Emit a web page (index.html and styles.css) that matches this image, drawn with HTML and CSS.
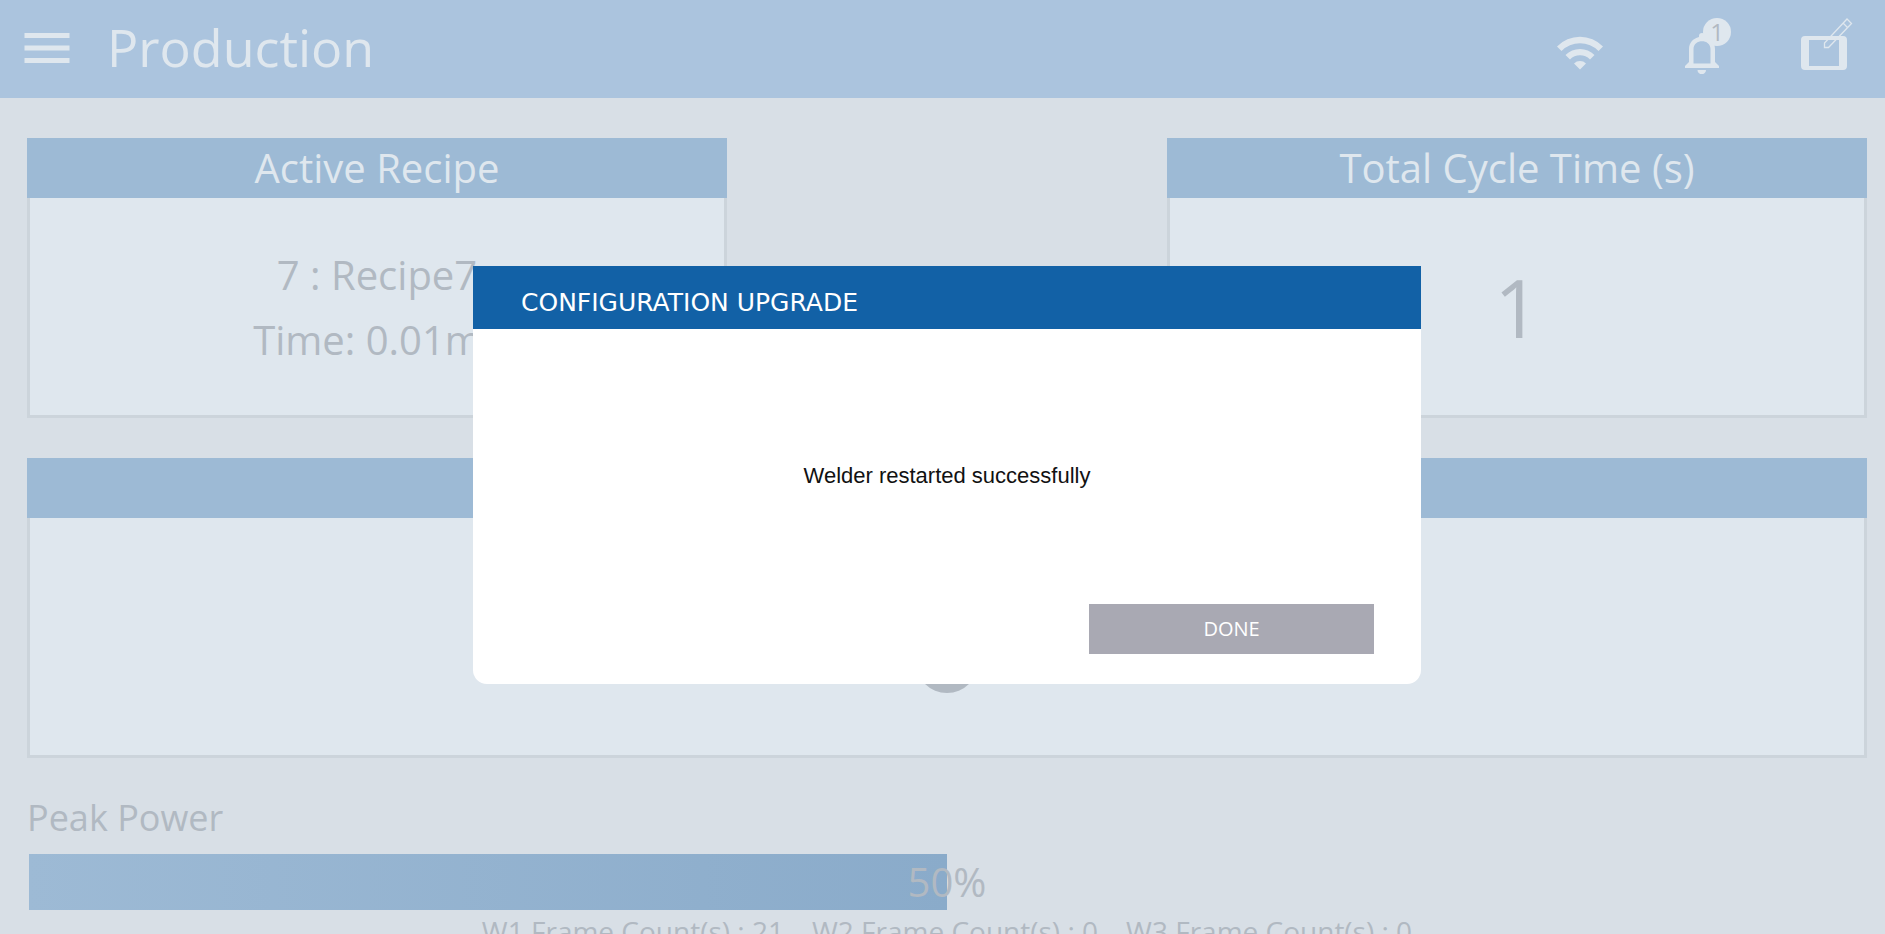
FILE: index.html
```html
<!DOCTYPE html>
<html lang="en">
<head>
<meta charset="utf-8">
<title>Production</title>
<link rel="stylesheet" href="styles.css">
</head>
<body>
<div class="screen">
  <header class="topbar">
    <button class="icon-button" type="button" aria-label="Menu">
      <svg width="46" height="30" viewBox="0 0 46 30"><path d="M.5 0h45v5H.5zM.5 12.500h45v5H.5zM.5 25h45v5H.5z"/></svg>
    </button>
    <h1 class="page-title">Production</h1>
    <div class="status">
      <button class="icon-button" type="button" aria-label="Wireless">
        <svg width="46" height="56" viewBox="0 0 46 56"><path d="M0 28.500A32 32 0 0 1 46 28.500L41.500 33A26 26 0 0 0 4.500 33ZM8.500 37A20.500 20.500 0 0 1 37.500 37L33 41.500A14 14 0 0 0 13 41.500ZM17 45.500A8.500 8.500 0 0 1 29 45.500L23 51.500Z"/></svg>
      </button>
      <button class="icon-button" type="button" aria-label="Notifications">
        <svg width="46" height="56" viewBox="0 0 46 56"><path fill-rule="evenodd" d="M0 50V48L4 44V31C4 25 8 20.500 14 19V18A3 3 0 0 1 20 18V19C26 20.500 30 25 30 31V44L34 48V50ZM8.500 45.500H25.500V31C25.500 20.500 8.500 20.500 8.500 31ZM12.500 52H21A4.200 4.200 0 0 1 12.500 52Z"/></svg>
        <span class="badge">1</span>
      </button>
      <button class="icon-button" type="button" aria-label="Edit screen">
        <svg width="52" height="56" viewBox="0 0 52 56"><path fill-rule="evenodd" d="M4 18H42Q46 18 46 22V48Q46 52 42 52H4Q0 52 0 48V22Q0 18 4 18ZM8 22V48H38V22Z"/><path class="pencil" d="M23.500 29.500V25L46 1L50.500 5.500L27.500 29.500ZM42 5L46.500 9.500"/></svg>
      </button>
    </div>
  </header>

  <main class="content">
    <div class="card-row">
      <section class="card card-recipe">
        <h2 class="card-title">Active Recipe</h2>
        <div class="card-body recipe"><p>7 : Recipe7</p><p>Time: 0.01ms</p></div>
      </section>
      <section class="card card-cycle">
        <h2 class="card-title">Total Cycle Time (s)</h2>
        <div class="card-body cycle">1</div>
      </section>
    </div>
    <section class="card card-wide">
      <h2 class="card-title"></h2>
      <div class="card-body"><span class="indicator"></span></div>
    </section>
    <section class="power">
      <h2 class="power-title">Peak Power</h2>
      <div class="meter"><div class="meter-fill" style="width:50%"></div><span class="meter-value">50%</span></div>
      <div class="frames"><span>W1 Frame Count(s) : 21</span><span>W2 Frame Count(s) : 0</span><span>W3 Frame Count(s) : 0</span></div>
    </section>
  </main>

  <div class="overlay">
    <div class="dialog" role="dialog" aria-labelledby="dialog-title">
      <h2 class="dialog-title" id="dialog-title">CONFIGURATION UPGRADE</h2>
      <p class="dialog-message">Welder restarted successfully</p>
      <div class="dialog-actions"><button class="done" type="button">DONE</button></div>
    </div>
  </div>
</div>
</body>
</html>
```
FILE: styles.css
```css
* { box-sizing: border-box; }
body, h1, h2, p { margin: 0; font-weight: 400; }
body { font-family: "Open Sans", sans-serif; background: #d8dfe6; color: #b1b9c2; }
button { border: 0; padding: 0; font-family: inherit; }

.screen { position: relative; height: 100vh; overflow: hidden; }

.topbar { display: flex; align-items: center; height: 98px; padding: 0 32px 2px 24px; background: #abc4de; color: #dfe7ee; }
.page-title { margin-left: 37px; padding-bottom: 2px; font-size: 52px; line-height: 94px; }
.status { display: flex; gap: 82px; margin-left: auto; padding-bottom: 4px; }
.icon-button { position: relative; display: flex; background: none; color: inherit; }
.icon-button svg { display: block; fill: currentColor; }
.icon-button .pencil { fill: none; stroke: currentColor; stroke-width: 1.3; }
.status .icon-button:last-child { margin-left: -12px; }
.badge { position: absolute; top: 0; right: 0; width: 28px; height: 28px; border-radius: 50%; background: #dfe7ee; color: #b1b9c2; font-size: 24px; line-height: 28px; text-align: center; }

.content { padding: 40px 18px 0 27px; }
.card-row { display: grid; grid-template-columns: 35fr 22fr 35fr; margin-bottom: 40px; }
.card { display: flex; flex-direction: column; }
.card-recipe, .card-cycle { min-height: 280px; }
.card-cycle { grid-column: 3; }
.card-wide { min-height: 300px; }
.card-title { height: 60px; background: #9dbad5; color: #dfe7ee; font-size: 40px; line-height: 60px; text-align: center; }
.card-body { display: flex; flex: 1; flex-direction: column; align-items: center; justify-content: center; border: 3px solid #ccd4db; border-top: 0; background: #dfe7ee; }
.recipe { font-size: 40px; line-height: 65px; }
.cycle { font-size: 80px; line-height: 100px; }
.indicator { width: 62px; height: 62px; margin-top: 51px; border-radius: 50%; background: #b1b9c2; }

.power { padding: 35px 2px 0 0; }
.power-title { font-size: 36px; line-height: 50px; }
.meter { position: relative; height: 56px; margin: 11px 0 0 2px; text-align: center; }
.meter-fill { height: 100%; background: linear-gradient(to right, #9dbad5, #8aabca); }
.meter-value { position: absolute; inset: 0; font-size: 40px; line-height: 56px; }
.frames { display: flex; justify-content: center; gap: 28px; padding: 3px 0 0 2px; font-size: 28px; line-height: 36px; white-space: nowrap; }

.overlay { position: absolute; inset: 0; display: flex; align-items: center; justify-content: center; padding: 16px 0 0 9px; }
.dialog { width: 948px; max-width: 100%; border-radius: 0 0 14px 14px; background: #fff; }
.dialog-title { padding: 10px 48px 0; background: #1261a6; color: #fff; font-family: "DejaVu Sans", sans-serif; font-size: 25px; line-height: 53px; }
.dialog-message { padding: 132px 48px 113px; color: #111; font-family: "Liberation Sans", sans-serif; font-size: 22px; line-height: 30px; text-align: center; }
.dialog-actions { display: flex; justify-content: flex-end; padding: 0 47px 30px; }
.done { width: 285px; height: 50px; padding-bottom: 2px; background: #a9a9b3; color: #fff; font-size: 20px; }
```
